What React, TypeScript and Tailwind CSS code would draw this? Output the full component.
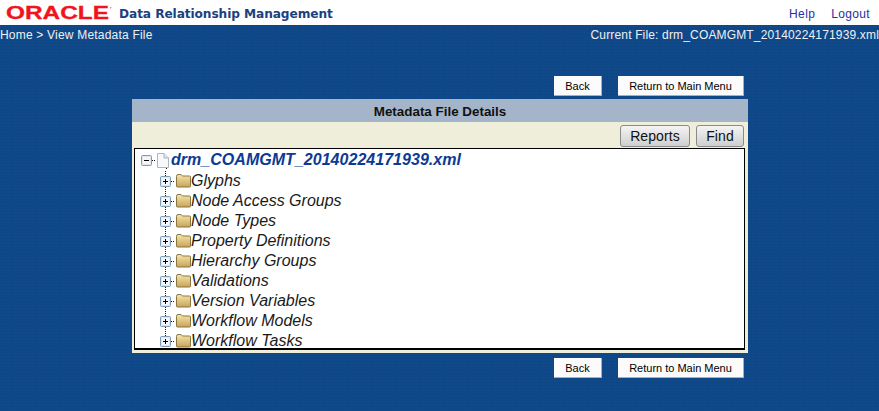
import React from "react";

const items = ["Glyphs","Node Access Groups","Node Types","Property Definitions","Hierarchy Groups","Validations","Version Variables","Workflow Models","Workflow Tasks"];

function Logo() {
  return (
    <svg width="112" height="25" viewBox="0 0 112 25" className="ml-[6px] shrink-0">
      <text x="0" y="19" textLength="103" lengthAdjust="spacingAndGlyphs" fontFamily="'Liberation Sans', sans-serif" fontWeight="700" fontSize="18" fill="#f0141c" stroke="#f0141c" strokeWidth="0.3">ORACLE</text>
      <text x="104" y="11" fontFamily="'Liberation Sans', sans-serif" fontSize="6" fontWeight="700" fill="#f0141c">'</text>
    </svg>
  );
}

function Plus({ last }: { last: boolean }) {
  return (
    <svg width="29" height="20" viewBox="0 0 29 20" className="shrink-0">
      <line x1="5.5" y1="0" x2="5.5" y2={last ? 10 : 20} stroke="#111" strokeDasharray="1 1" />
      <line x1="11" y1="10.5" x2="15" y2="10.5" stroke="#111" strokeDasharray="1 1" />
      <rect x="0.5" y="5.5" width="10" height="10" rx="1" fill="#dfe6ec" stroke="#7f9db9" />
      <rect x="2" y="7" width="7" height="7" fill="#f4f6f8" />
      <path d="M3 10.5H8M5.5 8V13" stroke="#000" />
    </svg>
  );
}

function Folder() {
  return (
    <svg width="15" height="15" viewBox="0 0 15 15" className="shrink-0 block">
      <defs>
        <linearGradient id="fold" x1="0" y1="0" x2="0" y2="1">
          <stop offset="0" stopColor="#f6e6ac" />
          <stop offset="1" stopColor="#c8a45a" />
        </linearGradient>
      </defs>
      <path d="M0.5 3.5Q0.5 1.5 2 1.5H5L6.5 3H13.5Q14.5 3 14.5 4V13Q14.5 14 13.5 14H1.5Q0.5 14 0.5 13Z" fill="url(#fold)" stroke="#8a7440" />
    </svg>
  );
}

function Btn({ children, w }: { children: React.ReactNode; w: string }) {
  return (
    <button className={`${w} h-[20px] pt-[2px] bg-[#fbfbfb] text-black text-[11px] border-b border-r border-[#a8b0bc] leading-[17px]`}>
      {children}
    </button>
  );
}

function NavButtons() {
  return (
    <div className="flex justify-end gap-[16px] pr-[4px]">
      <Btn w="w-[48px]">Back</Btn>
      <Btn w="w-[126px]">Return to Main Menu</Btn>
    </div>
  );
}

function ToolBtn({ children, w }: { children: React.ReactNode; w: string }) {
  return (
    <button className={`${w} h-[22px] pt-[1px] rounded-[3px] border border-[#8a8a8a] bg-gradient-to-b from-[#f4f4f4] to-[#cfcfcf] text-[14px] leading-[19px] text-[#111] tracking-[0.1px]`}>
      {children}
    </button>
  );
}

export default function App() {
  return (
    <div className="w-[879px] h-[411px] overflow-hidden bg-[#10498a] font-['Liberation_Sans',Arial,sans-serif] bg-[radial-gradient(#0d427f_0.5px,transparent_0.7px)] bg-[length:3px_3px]">
      <header className="h-[25px] bg-white flex items-center">
        <Logo />
        <span className="ml-[1px] pt-[3px] font-['DejaVu_Sans',sans-serif] font-bold text-[12.2px] text-[#1c3f80] tracking-[-0.1px]">Data Relationship Management</span>
        <nav className="ml-auto flex gap-[16px] pt-[2px] pr-[9px] text-[12px] text-[#2a2f9f] tracking-[0.35px]">
          <span>Help</span>
          <span>Logout</span>
        </nav>
      </header>
      <div className="flex justify-between text-[12px] leading-[18px] text-[#f0f0f0] pt-[1px]">
        <span className="tracking-[0.2px]">Home &gt; View Metadata File</span>
        <span className="tracking-[0.16px]">Current File: drm_COAMGMT_20140224171939.xml</span>
      </div>
      <main className="w-[616px] ml-[132px] mt-[32px]">
        <NavButtons />
        <section className="mt-[3px] h-[254px] bg-[#eeeeda] flex flex-col">
          <h1 className="h-[23px] bg-[#a5b5c9] text-center text-[13.4px] font-bold leading-[25px] text-[#111]">Metadata File Details</h1>
          <div className="h-[26px] flex justify-end items-center gap-[6px] pr-[4px] pt-[1px]">
            <ToolBtn w="w-[70px]">Reports</ToolBtn>
            <ToolBtn w="w-[48px]">Find</ToolBtn>
          </div>
          <div className="ml-[2px] mr-[3px] h-[202px] bg-white border-b-2 border-x border-t border-black overflow-hidden text-[16px] italic leading-[20px]">
            <div className="flex items-center h-[21px] pt-[1px] pl-[6px]">
              <svg width="30" height="20" viewBox="0 0 30 20" className="shrink-0">
                <line x1="11" y1="10.5" x2="15" y2="10.5" stroke="#111" strokeDasharray="1 1" />
                <line x1="25.5" y1="18" x2="25.5" y2="20" stroke="#111" strokeDasharray="1 1" />
                <rect x="0.5" y="5.5" width="10" height="10" rx="1" fill="#dfe6ec" stroke="#7f9db9" />
                <rect x="2" y="7" width="7" height="7" fill="#f4f6f8" />
                <path d="M3 10.5H8" stroke="#000" />
                <path d="M16.5 3.5H23L27.5 8V17.5H16.5Z" fill="#f7f9fc" stroke="#a9b4c4" />
                <path d="M23 3.5V8H27.5" fill="#dfe5ee" stroke="#a9b4c4" />
              </svg>
              <span className="font-bold text-[#0c3a94] tracking-[0.03px]">drm_COAMGMT_20140224171939.xml</span>
            </div>
            <div className="mt-[1px]">
              {items.map((t, i) => (
                <div key={t} className="flex items-center h-[20px] pl-[25px]">
                  <Plus last={i === items.length - 1} />
                  <span className="-ml-[13px] -mt-[2px]"><Folder /></span>
                  <span className="text-[#1a1a1a]">{t}</span>
                </div>
              ))}
            </div>
          </div>
        </section>
        <div className="mt-[5px]">
          <NavButtons />
        </div>
      </main>
    </div>
  );
}
